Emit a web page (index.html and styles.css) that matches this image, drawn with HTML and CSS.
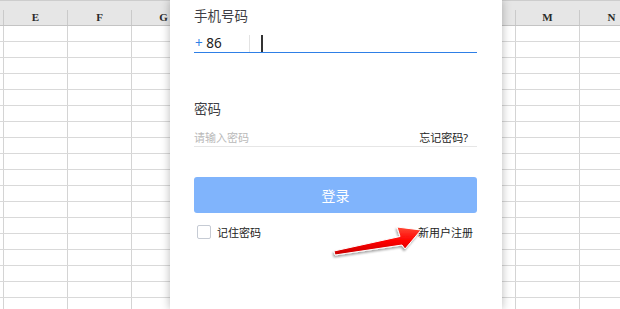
FILE: index.html
```html
<!DOCTYPE html>
<html>
<head>
  <link rel="stylesheet" href="styles.css">
</head>
<body>
  <div class="sheet">
    <div class="sheet-head">
      <div class="row-head"></div>
      <div class="col-head">E</div>
      <div class="col-head">F</div>
      <div class="col-head">G</div>
      <!-- H..L sit under the login panel -->
      <div class="col-head"></div>
      <div class="col-head"></div>
      <div class="col-head"></div>
      <div class="col-head"></div>
      <div class="col-head"></div>
      <div class="col-head">M</div>
      <div class="col-head">N</div>
    </div>
    <div class="sheet-body"></div>
  </div>

  <div class="login">
    <div class="field-label first">手机号码</div>
    <div class="phone-row">
      <div class="prefix"><span class="plus">+</span> 86</div>
      <div class="phone-input"><span class="caret"></span></div>
    </div>

    <div class="field-label">密码</div>
    <div class="pass-row">
      <span class="placeholder">请输入密码</span>
      <span class="forgot">忘记密码?</span>
    </div>

    <button class="login-btn">登录</button>

    <div class="login-foot">
      <label class="remember"><span class="check"></span>记住密码</label>
      <span class="register">新用户注册</span>
    </div>
  </div>

  <!-- red annotation arrow -->
  <svg class="arrow" width="110" height="50" viewBox="0 0 110 50">
    <defs>
      <linearGradient id="red" x1="0" y1="0" x2="0" y2="1">
        <stop offset="0" stop-color="#ff4a36"/>
        <stop offset="0.5" stop-color="#ff0000"/>
        <stop offset="1" stop-color="#c80000"/>
      </linearGradient>
      <filter id="shade" x="-20%" y="-30%" width="140%" height="170%">
        <feDropShadow dx="-1" dy="2" stdDeviation="1.3" flood-color="#000" flood-opacity="0.35"/>
      </filter>
    </defs>
    <polygon points="9,31 75,16.5 72,7 96,10 80,29 77,25 10,35"
             fill="url(#red)" stroke="#fff" stroke-width="1" stroke-linejoin="round" filter="url(#shade)"/>
  </svg>
</body>
</html>
```

FILE: styles.css
```css
html, body {
  margin: 0;
  padding: 0;
}
body {
  width: 620px;
  height: 309px;
  overflow: hidden;
  position: relative;
  background: #fff;
  font-family: "Noto Sans", "Noto Sans CJK SC", sans-serif;
}
.sheet {
  display: flex;
  flex-direction: column;
  height: 100%;
}
.sheet-head {
  display: flex;
  height: 24px;
  background: #e6e6e6;
  border-top: 1px solid #cdcdcd;
  border-bottom: 1px solid #c4c4c4;
  flex: none;
}
.row-head {
  width: 3px;
  flex: none;
}
.col-head {
  width: 63px;
  flex: none;
  margin-top: 9px;
  height: 15px;
  border-left: 1px solid #cacaca;
  text-align: center;
  font-family: "Liberation Serif", serif;
  font-weight: bold;
  font-size: 11px;
  line-height: 15px;
  color: #2a2a2a;
}
.sheet-body {
  flex: 1;
  background-color: #fff;
  background-image:
    repeating-linear-gradient(to bottom, transparent 0 15px, #d9d9d9 15px 16px),
    repeating-linear-gradient(to right, #d4d4d4 0 1px, transparent 1px 64px);
  background-position: 0 0, 3px 0;
  border-left: 3px solid #eeeeee;
  margin-left: -3px;
}

/* login panel */
.login {
  position: absolute;
  left: 170px;
  top: 0;
  width: 332px;
  height: 309px;
  box-sizing: border-box;
  padding: 0 25px 0 24px;
  background: #fff;
  box-shadow: 0 0 9px rgba(0, 0, 0, 0.28);
  display: flex;
  flex-direction: column;
}
.field-label {
  font-size: 13.5px;
  line-height: 20px;
  color: #3f3f46;
  margin-top: 46px;
}
.field-label.first {
  margin-top: 6px;
}
.phone-row {
  display: flex;
  margin-top: 9px;
  height: 17px;
  border-bottom: 1px solid #2e7fe6;
}
.prefix {
  width: 54px;
  border-right: 1px solid #e3e3e3;
  font-size: 13.5px;
  line-height: 17px;
  color: #222;
  padding-left: 1px;
}
.plus {
  color: #2e7fe6;
}
.phone-input {
  flex: 1;
  padding-left: 11px;
  display: flex;
  align-items: stretch;
}
.caret {
  width: 1.5px;
  background: #333;
}
.pass-row {
  display: flex;
  justify-content: space-between;
  align-items: center;
  margin-top: 8px;
  height: 19px;
  border-bottom: 1px solid #e6e6e6;
  font-size: 11px;
}
.placeholder {
  color: #b9b9b9;
}
.forgot {
  color: #222;
  padding-right: 9px;
}
.login-btn {
  margin-top: 30px;
  height: 36px;
  border: none;
  border-radius: 3px;
  background: #80b4fc;
  color: #fff;
  font-family: inherit;
  font-size: 14px;
  padding: 0;
}
.login-foot {
  display: flex;
  justify-content: space-between;
  align-items: center;
  margin-top: 9px;
  height: 20px;
  font-size: 11px;
  color: #222;
}
.remember {
  display: flex;
  align-items: center;
  padding-left: 3px;
}
.check {
  width: 12px;
  height: 12px;
  border: 1px solid #c6cbd4;
  border-radius: 2px;
  margin-right: 6px;
}
.register {
  padding-right: 4px;
}
.arrow {
  position: absolute;
  left: 325px;
  top: 220px;
}
```
